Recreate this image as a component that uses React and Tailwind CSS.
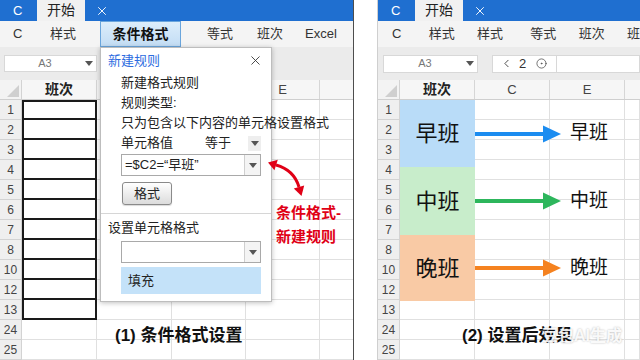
import { X, ChevronLeft, CircleDot } from 'lucide-react';

const ROWS = ['1', '2', '3', '4', '5', '6', '7', '8', '10', '12', '13', '24', '25'];

const RESULTS = [
  { label: '早班', h: 'h-[67px]', bg: 'bg-[#b9dcf8]', color: '#1b8cf0' },
  { label: '中班', h: 'h-[68px]', bg: 'bg-[#c8edcb]', color: '#2db65c' },
  { label: '晚班', h: 'h-[66px]', bg: 'bg-[#f9caa5]', color: '#f5821f' },
];

function Caret() {
  return (
    <svg width="8" height="5" viewBox="0 0 8 5">
      <polygon points="0,0 8,0 4,5" fill="#555" />
    </svg>
  );
}

function TitleBar() {
  return (
    <div className="h-[21px] bg-[#1f6fd0] flex items-stretch text-[13px]">
      <span className="w-[37px] pl-[13px] flex items-center text-white">C</span>
      <span className="w-[48px] bg-[#f1f1f1] text-[#222] flex items-center justify-center text-[14px]">开始</span>
      <span className="ml-[10px] flex items-center text-white">
        <X size={14} strokeWidth={1.6} />
      </span>
    </div>
  );
}

function RowHead({ label }) {
  return (
    <div className="h-[20px] w-[22px] shrink-0 bg-[#efefef] border-r border-b border-[#d3d3d3] flex items-center justify-center text-[12px] text-[#444]">
      {label}
    </div>
  );
}

function Corner() {
  return (
    <div className="w-[22px] shrink-0 bg-[#f3f3f3] border-r border-[#d3d3d3] flex items-end justify-end pr-[2px] pb-[2px]">
      <svg width="12" height="12" viewBox="0 0 12 12">
        <polygon points="12,0 12,12 0,12" fill="#cfcfcf" />
      </svg>
    </div>
  );
}

function LeftPanel() {
  return (
    <div className="relative w-[354px] h-full shrink-0 flex flex-col border-r border-[#4d4d4d]">
      <TitleBar />

      {/* ribbon */}
      <div className="h-[26px] bg-[#f4f4f4] flex items-center text-[13px] text-[#333] pl-[13px]">
        <span className="w-[37px]">C</span>
        <span className="w-[50px]">样式</span>
        <span className="w-[81px] h-full bg-linear-to-b from-[#dcedfb] to-[#c3ddf4] border border-[#6aa5dc] flex items-center justify-center font-bold text-[14px] text-[#111]">
          条件格式
        </span>
        <span className="ml-[26px] w-[50px]">等式</span>
        <span className="w-[48px]">班次</span>
        <span>Excel</span>
      </div>

      {/* formula band */}
      <div className="h-[33px] bg-[#ebebeb] flex items-center pl-[4px]">
        <div className="w-[93px] h-[17px] bg-white border border-[#d8d8d8] flex items-center">
          <span className="flex-1 text-center text-[11px] text-[#777]">A3</span>
          <span className="pr-[3px] flex items-center"><Caret /></span>
        </div>
      </div>

      {/* column headers */}
      <div className="h-[20px] flex bg-[#f6f6f6] border-b border-[#cfcfcf] text-[13px]">
        <Corner />
        <div className="w-[75px] border-r border-[#d6d6d6] flex items-center justify-center font-bold text-[14px]">班次</div>
        <div className="w-[75px] border-r border-[#d6d6d6]" />
        <div className="w-[74px] border-r border-[#d6d6d6]" />
        <div className="w-[74px] border-r border-[#d6d6d6] flex items-center justify-center text-[#444]">E</div>
        <div className="flex-1" />
      </div>

      {/* rows */}
      <div className="flex flex-col">
        {ROWS.map((r, i) => (
          <div key={r} className="h-[20px] flex">
            <RowHead label={r} />
            <div
              className={
                i === 0
                  ? 'w-[75px] border-2 border-[#1a1a1a]'
                  : i < 11
                  ? 'w-[75px] border-x-2 border-b-2 border-[#1a1a1a]'
                  : 'w-[75px] border-r border-b border-[#e0e0e0]'
              }
            />
            <div className="w-[75px] border-r border-b border-[#e0e0e0]" />
            <div className="w-[74px] border-r border-b border-[#e0e0e0]" />
            <div className="w-[74px] border-r border-b border-[#e0e0e0]" />
            <div className="flex-1 border-b border-[#e0e0e0]" />
          </div>
        ))}
      </div>

      {/* dialog */}
      <div className="absolute left-[100px] top-[47px] w-[172px] h-[255px] bg-white border border-[#bdbdbd] shadow-[0_1px_5px_rgba(0,0,0,0.25)] flex flex-col text-[13px] text-[#222]">
        <div className="h-[25px] flex items-center justify-between pl-[7px] pr-[8px]">
          <span className="text-[#2d6cdf]">新建规则</span>
          <X size={15} strokeWidth={1.4} className="text-[#333]" />
        </div>
        <div className="pl-[20px] flex flex-col">
          <div className="h-[20px] flex items-center">新建格式规则</div>
          <div className="h-[20px] flex items-center">规则类型:</div>
          <div className="h-[20px] flex items-center whitespace-nowrap">只为包含以下内容的单元格设置格式</div>
          <div className="h-[20px] flex items-center">
            <span>单元格值</span>
            <span className="ml-[32px]">等于</span>
            <span className="ml-[17px] w-[13px] h-[15px] bg-[#eeeeee] flex items-center justify-center">
              <Caret />
            </span>
          </div>
          <div className="mt-[1px] w-[140px] h-[22px] border border-[#a9a9a9] flex">
            <span className="flex-1 flex items-center pl-[3px]">=$C2=“早班”</span>
            <span className="w-[16px] border-l border-[#cfcfcf] bg-[#f4f4f4] flex items-center justify-center">
              <Caret />
            </span>
          </div>
          <div className="mt-[6px] ml-[1px] w-[50px] h-[23px] rounded-[3px] border border-[#8a8a8a] bg-linear-to-b from-white to-[#dcdcdc] shadow-[0_1px_1px_rgba(0,0,0,0.15)] flex items-center justify-center">
            格式
          </div>
        </div>
        <div className="mt-[8px] border-t border-[#d6d6d6]" />
        <div className="h-[27px] flex items-center pl-[7px]">设置单元格格式</div>
        <div className="pl-[20px] flex flex-col">
          <div className="w-[140px] h-[22px] border border-[#a9a9a9] flex">
            <span className="flex-1" />
            <span className="w-[16px] border-l border-[#cfcfcf] bg-[#f4f4f4] flex items-center justify-center">
              <Caret />
            </span>
          </div>
          <div className="mt-[4px] w-[140px] h-[27px] bg-[#c4e2f9] flex items-center pl-[7px]">填充</div>
        </div>
      </div>

      {/* red annotation */}
      <svg className="absolute left-[264px] top-[154px]" width="44" height="46" viewBox="0 0 44 46">
        <path d="M12 11 Q30 16 35 33" fill="none" stroke="#e00016" strokeWidth="3" />
        <polygon points="4,8.5 13.8,5.8 10.4,16.2" fill="#e00016" />
        <polygon points="37.5,42 40.2,31.4 29.8,34.6" fill="#e00016" />
      </svg>
      <div className="absolute left-[276px] top-[201px] text-[15px] leading-[24px] font-bold text-[#e00016] whitespace-nowrap">
        <div>条件格式-</div>
        <div>新建规则</div>
      </div>

      <div className="absolute left-[115px] top-[325px] text-[17px] leading-[22px] font-bold text-[#111] whitespace-nowrap">
        (1) 条件格式设置
      </div>
    </div>
  );
}

function RightPanel() {
  return (
    <div className="relative flex-1 h-full flex flex-col border-l border-[#cfcfcf] overflow-hidden">
      <TitleBar />

      <div className="h-[26px] bg-[#f4f4f4] flex items-center text-[13px] text-[#333] pl-[14px] whitespace-nowrap">
        <span className="w-[38px]">C</span>
        <span className="w-[50px]">样式</span>
        <span className="w-[55px]">样式</span>
        <span className="w-[50px]">等式</span>
        <span className="w-[50px]">班次</span>
        <span>班</span>
      </div>

      <div className="h-[33px] bg-[#ebebeb] flex items-center pl-[5px]">
        <div className="w-[95px] h-[18px] bg-white border border-[#d8d8d8] flex items-center">
          <span className="flex-1 text-center text-[11px] text-[#777]">A3</span>
          <span className="pr-[3px] flex items-center"><Caret /></span>
        </div>
        <div className="ml-[14px] flex-1 h-[18px] bg-white border border-[#d8d8d8] flex items-center">
          <div className="w-[64px] h-full border-r border-[#d8d8d8] flex items-center text-[13px] text-[#333]">
            <ChevronLeft size={13} strokeWidth={1.6} className="ml-[7px]" />
            <span className="ml-[6px]">2</span>
            <CircleDot size={11} strokeWidth={1.6} className="ml-[10px] text-[#444]" />
          </div>
        </div>
      </div>

      <div className="h-[20px] flex bg-[#f6f6f6] border-b border-[#cfcfcf] text-[13px]">
        <Corner />
        <div className="w-[75px] border-r border-[#d6d6d6] flex items-center justify-center font-bold text-[14px]">班次</div>
        <div className="w-[75px] border-r border-[#d6d6d6] flex items-center justify-center text-[#444]">C</div>
        <div className="w-[75px] border-r border-[#d6d6d6] flex items-center justify-center text-[#444]">E</div>
        <div className="flex-1" />
      </div>

      <div className="flex">
        <div className="flex flex-col">
          {ROWS.map((r) => (
            <RowHead key={r} label={r} />
          ))}
        </div>
        <div className="relative flex-1 flex">
          {['w-[75px]', 'w-[75px]', 'w-[75px]', 'flex-1'].map((w, c) => (
            <div key={c} className={`${w} flex flex-col border-r border-[#e0e0e0]`}>
              {ROWS.map((r) => (
                <div key={r} className="h-[20px] border-b border-[#e0e0e0]" />
              ))}
            </div>
          ))}
          <div className="absolute left-0 top-0 w-full flex flex-col">
            {RESULTS.map((res) => (
              <div key={res.label} className={`${res.h} flex items-center`}>
                <div className={`w-[75px] h-full ${res.bg} flex items-center justify-center text-[22px] text-[#111]`}>
                  {res.label}
                </div>
                <svg width="86" height="18" viewBox="0 0 86 18">
                  <rect x="0" y="7" width="72" height="4" fill={res.color} />
                  <polygon points="68,0.5 86,9 68,17.5" fill={res.color} />
                </svg>
                <span className="ml-[9px] text-[19px] text-[#111]">{res.label}</span>
              </div>
            ))}
          </div>
        </div>
      </div>

      <div className="absolute left-[84px] top-[325px] text-[17px] leading-[22px] font-bold text-[#111] whitespace-nowrap">
        (2) 设置后效果
      </div>
      <div className="absolute left-[164px] top-[325px] text-[16px] leading-[22px] font-bold text-white/90 whitespace-nowrap [text-shadow:0_0_2px_rgba(0,0,0,0.3)]">
        豆包AI生成
      </div>
    </div>
  );
}

export default function App() {
  return (
    <div className="w-[640px] h-[360px] flex bg-white overflow-hidden text-[#222] font-['Liberation_Sans','Noto_Sans_CJK_SC',sans-serif]">
      <LeftPanel />
      <div className="w-[23px] shrink-0 bg-white" />
      <RightPanel />
    </div>
  );
}
